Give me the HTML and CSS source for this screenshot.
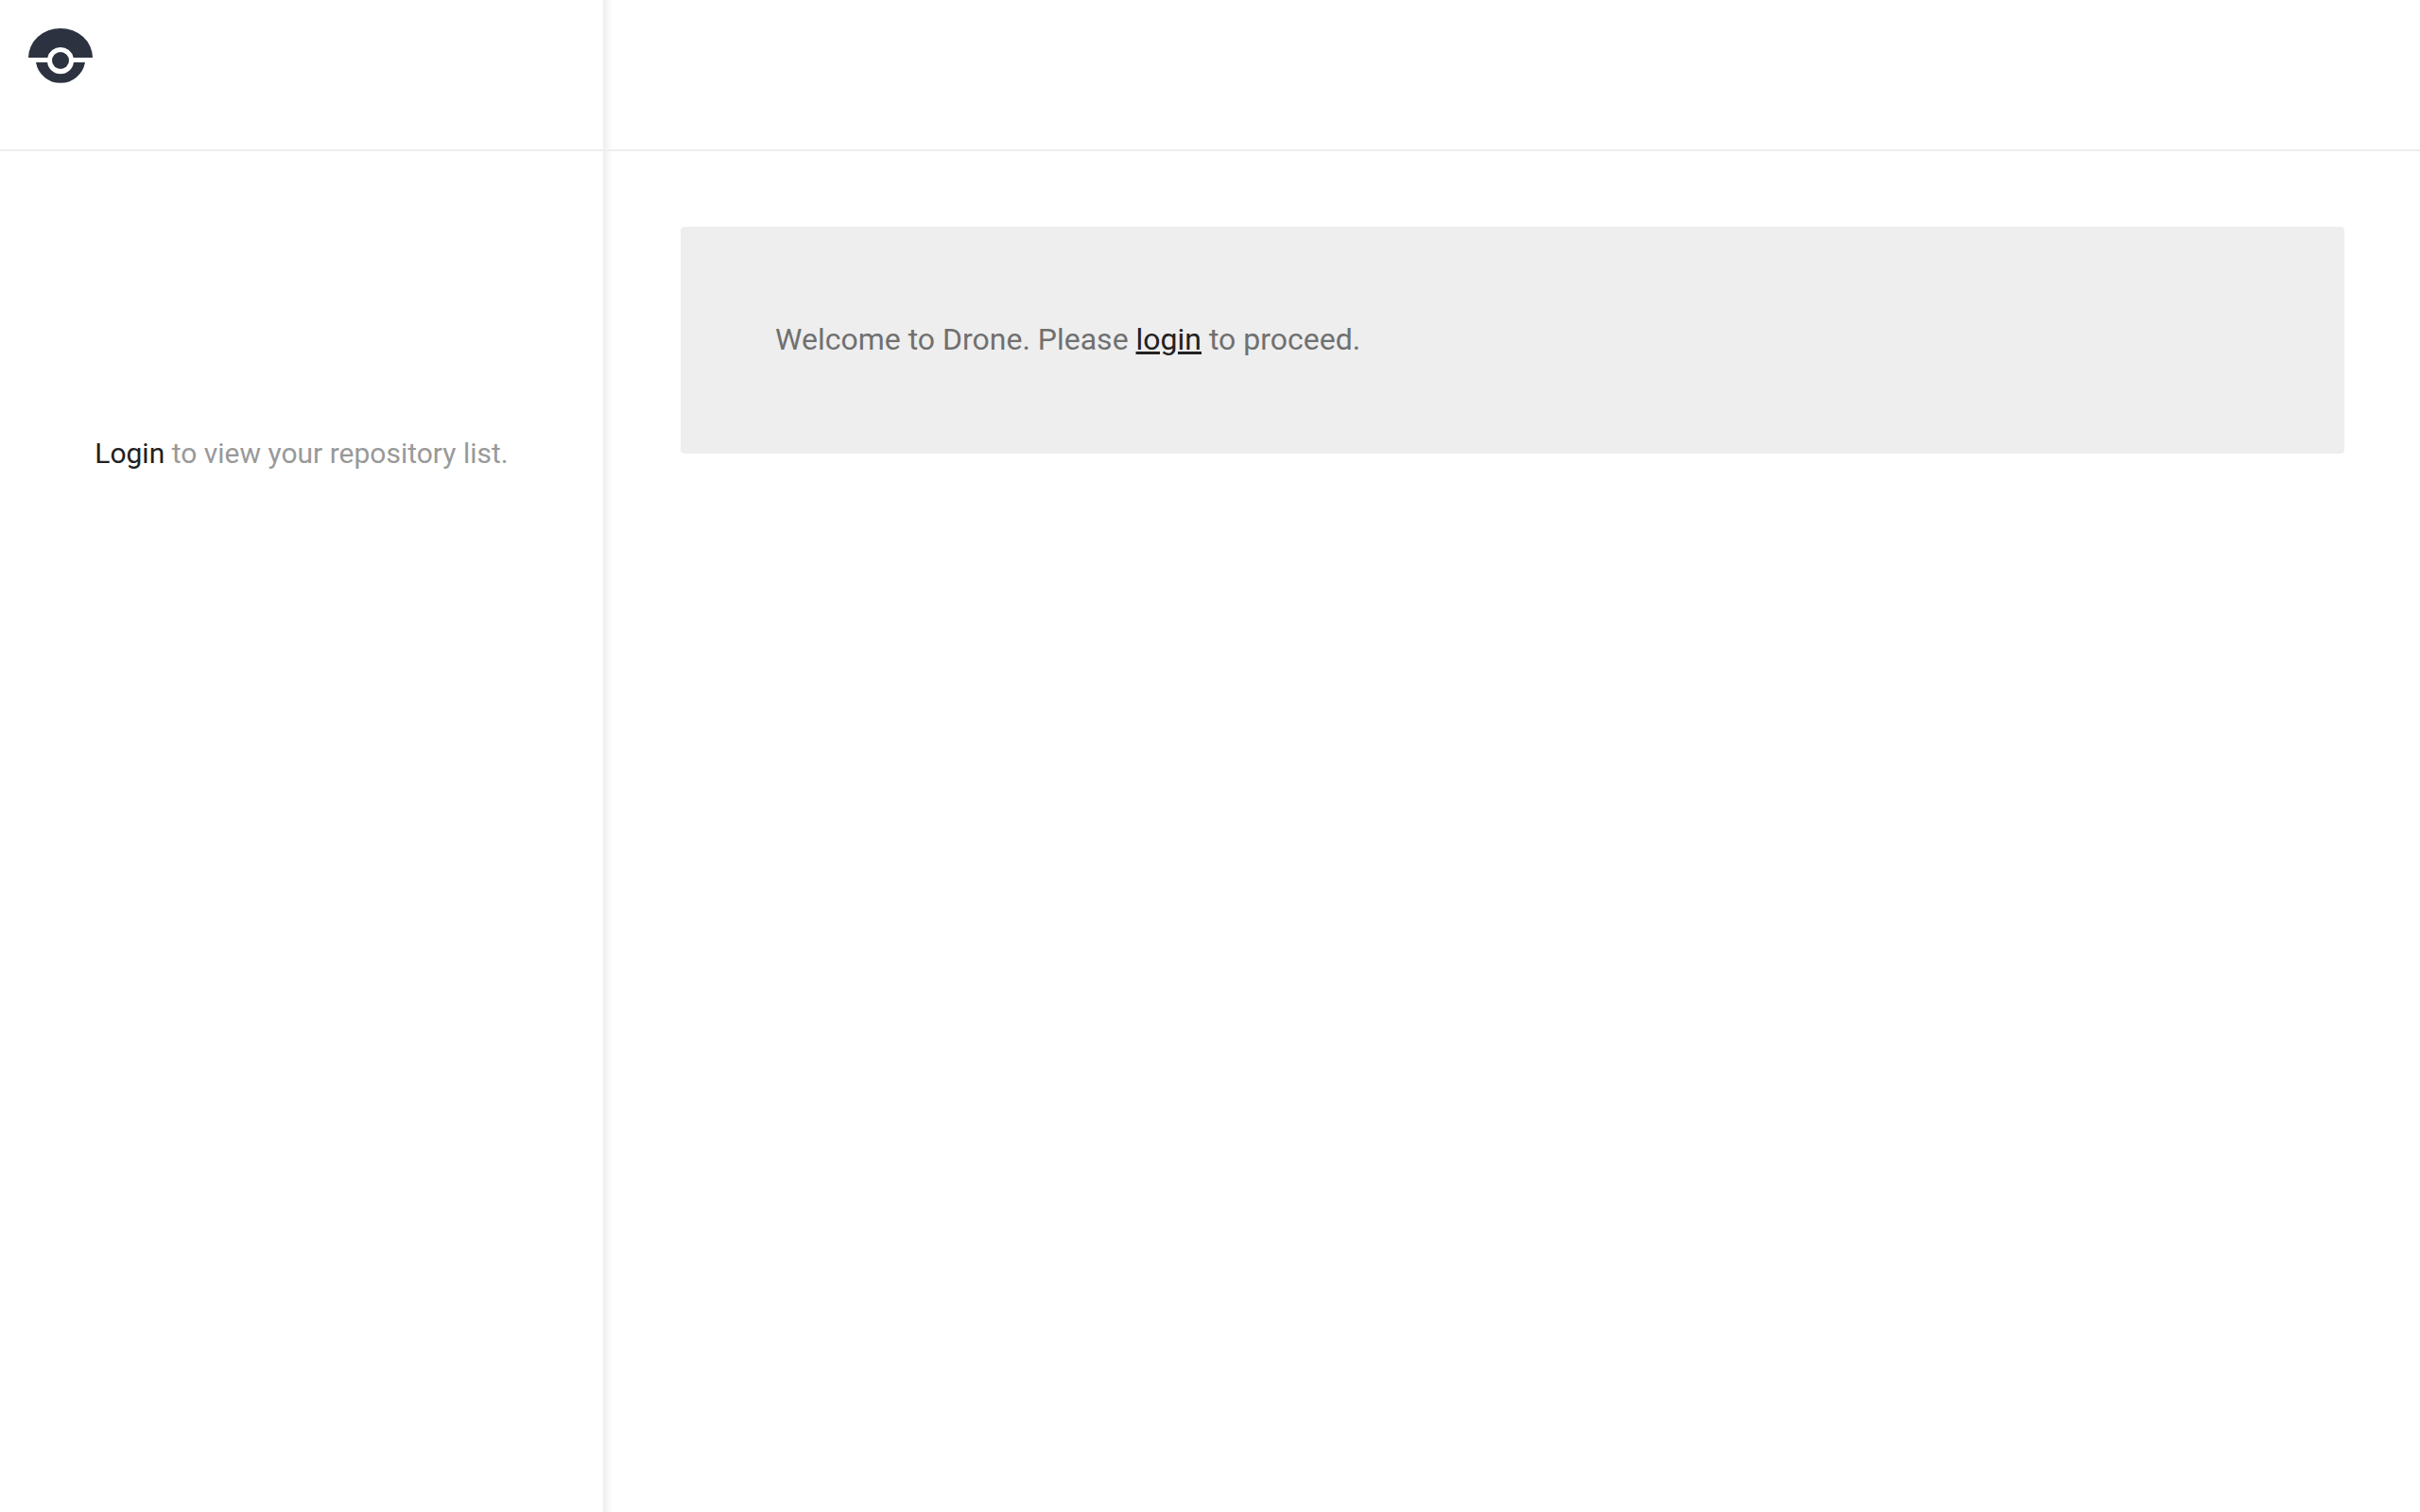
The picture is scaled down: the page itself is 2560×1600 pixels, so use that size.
FILE: index.html
```html
<!DOCTYPE html>
<html lang="en">
<head>
<meta charset="utf-8">
<title>Drone</title>
<link rel="stylesheet" href="styles.css">
</head>
<body>
<div class="app">
  <aside class="sidebar">
    <div class="brand">
      <svg class="logo" width="68" height="58" viewBox="0 0 68 58" aria-label="Drone logo">
        <path class="logo-dark" d="M0 31 A34 31 0 0 1 68 31 L47.7 31 A14 14 0 0 0 20.3 31 Z"/>
        <path class="logo-dark" d="M8 36 L20.1 36 A14 14 0 0 0 47.9 36 L60 36 A26.4 26.4 0 0 1 8 36 Z"/>
        <circle class="logo-dark" cx="34" cy="34" r="9"/>
      </svg>
    </div>
    <p class="hint"><a class="hint-link" href="#">Login</a> to view your repository list.</p>
  </aside>
  <main class="content">
    <div class="topbar"></div>
    <div class="body">
      <div class="alert">Welcome to Drone. Please <a class="alert-link" href="#">login</a> to proceed.</div>
    </div>
  </main>
</div>
</body>
</html>
```
FILE: styles.css
```css
html, body {
  margin: 0;
  height: 100%;
  background: #fff;
}
body {
  font-family: Roboto, "Liberation Sans", sans-serif;
}
.app {
  display: flex;
  height: 100vh;
  overflow: hidden;
}
.sidebar {
  width: 638px;
  flex: none;
  text-align: center;
  background: #fff;
}
.brand {
  height: 160px;
  box-sizing: border-box;
  padding: 30px;
  border-bottom: 2px solid #eee;
}
.logo {
  display: block;
}
.logo-dark {
  fill: #2c3240;
}
.hint {
  margin: 0;
  padding-top: 300px;
  font-size: 30px;
  line-height: 40px;
  color: #999;
}
.hint-link {
  color: #212121;
  text-decoration: none;
}
.content {
  flex: 1;
  min-width: 0;
  background: linear-gradient(90deg, #eee 0, #f1f1f1 2px, #f7f7f7 5px, #fff 10px) no-repeat 0 0 / 10px 100%;
}
.topbar {
  height: 158px;
  margin-left: 2px;
  border-bottom: 2px solid #eee;
}
.body {
  padding: 80px 80px 0 82px;
}
.alert {
  height: 240px;
  box-sizing: border-box;
  padding: 97px 100px 0;
  background: #eee;
  border-radius: 4px;
  font-size: 32px;
  line-height: 44px;
  color: #707070;
}
.alert-link {
  color: #212121;
  text-decoration: underline;
}
```
